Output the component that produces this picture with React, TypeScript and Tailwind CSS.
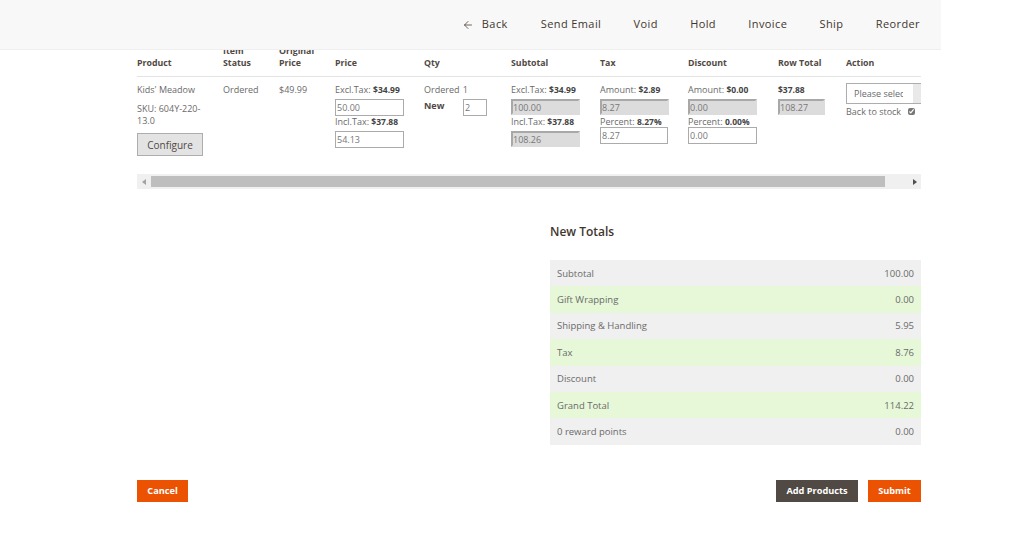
import React from 'react';
import { ArrowLeft } from 'lucide-react';

const navItems = ['Send Email', 'Void', 'Hold', 'Invoice', 'Ship', 'Reorder'];

const totals = [
  ['Subtotal', '100.00'],
  ['Gift Wrapping', '0.00'],
  ['Shipping & Handling', '5.95'],
  ['Tax', '8.76'],
  ['Discount', '0.00'],
  ['Grand Total', '114.22'],
  ['0 reward points', '0.00'],
];

const gridCols = 'grid grid-cols-[86px_56px_56px_89px_87px_89px_88px_90px_68px_75px]';

const Field = ({ value, disabled, w = 'w-[69px]' }: { value: string; disabled?: boolean; w?: string }) => (
  <input
    readOnly
    value={value}
    className={
      disabled
        ? `${w} block h-[16px] pl-[0px] text-[9px] text-[#777] bg-[#dcdcdc] border-[2px] border-[#dcdcdc] border-t-[#a8a8a8] border-l-[#a8a8a8] outline-none`
        : `${w} block h-[17px] pl-[1px] text-[9px] text-[#777] bg-white border border-[#ababab] outline-none`
    }
  />
);

const Line = ({ label, value }: { label: string; value: string }) => (
  <div className="h-[13px] leading-[13px] mb-[3px] whitespace-nowrap">
    {label} <b className="font-bold text-[8.5px] text-[#444]">{value}</b>
  </div>
);

export default function App() {
  return (
    <div className="w-[1034px] h-[538px] bg-white overflow-hidden font-['Open_Sans',sans-serif] text-[9px] text-[#6a6a6a]">
      <header className="w-[941px] h-[50px] bg-[#f8f8f8] border-b border-[#efefef] flex items-center justify-end pr-[21px] text-[11px] text-[#41362f] tracking-[0.4px]">
        <div className="flex items-center gap-[8px] mr-[33px]">
          <ArrowLeft size={12} strokeWidth={1.5} />
          <span>Back</span>
        </div>
        <div className="flex gap-[32.3px]">
          {navItems.map((item) => (
            <span key={item}>{item}</span>
          ))}
        </div>
      </header>

      <main className="ml-[137px] w-[784px]">
        {/* header row is taller than its box, top line gets cut off by the bar */}
        <div className="h-[27px] flex flex-col justify-end overflow-hidden pb-[7px] border-b border-[#e3e3e3]">
          <div className={`${gridCols} shrink-0 items-end font-bold text-[#514943] leading-[12px] text-[8.8px]`}>
            <span>Product</span>
            <span>Item<br />Status</span>
            <span>Original<br />Price</span>
            <span>Price</span>
            <span>Qty</span>
            <span>Subtotal</span>
            <span>Tax</span>
            <span>Discount</span>
            <span>Row Total</span>
            <span>Action</span>
          </div>
        </div>

        <div className={`${gridCols} h-[97px] pt-[6px] overflow-hidden`}>
          <div>
            <div className="h-[13px] leading-[13px]">Kids' Meadow</div>
            <div className="mt-[7px] leading-[12px] w-[70px]">SKU: 604Y-220-13.0</div>
            <button className="mt-[6px] w-[66px] h-[23px] pt-[1px] bg-[#e3e3e3] border border-[#adadad] text-[10px] text-[#514943]">Configure</button>
          </div>
          <div className="leading-[13px]">Ordered</div>
          <div className="leading-[13px]">$49.99</div>
          <div>
            <Line label="Excl.Tax:" value="$34.99" />
            <Field value="50.00" />
            <div className="-mt-[1px]"><Line label="Incl.Tax:" value="$37.88" /></div>
            <Field value="54.13" />
          </div>
          <div>
            <div className="h-[13px] leading-[13px] mb-[3px]">Ordered <span className="ml-[1px]">1</span></div>
            <div className="flex items-start">
              <b className="w-[39px] font-bold text-[#514943] leading-[13px]">New</b>
              <Field value="2" w="w-[24px]" />
            </div>
          </div>
          <div>
            <Line label="Excl.Tax:" value="$34.99" />
            <Field value="100.00" disabled />
            <Line label="Incl.Tax:" value="$37.88" />
            <Field value="108.26" disabled />
          </div>
          <div>
            <Line label="Amount:" value="$2.89" />
            <Field value="8.27" disabled />
            <div className="-mb-[4px]"><Line label="Percent:" value="8.27%" /></div>
            <Field value="8.27" w="w-[68px]" />
          </div>
          <div>
            <Line label="Amount:" value="$0.00" />
            <Field value="0.00" disabled />
            <div className="-mb-[4px]"><Line label="Percent:" value="0.00%" /></div>
            <Field value="0.00" />
          </div>
          <div>
            <Line label="" value="$37.88" />
            <Field value="108.27" disabled w="w-[47px]" />
          </div>
          <div className="overflow-hidden">
            <div className="w-[90px] h-[21px] flex border border-[#adadad] bg-white">
              <span className="w-[49px] ml-[7px] mr-[10px] overflow-hidden whitespace-nowrap leading-[20px]">Please select</span>
              <span className="flex-1 bg-[#e9e9e9]" />
            </div>
            <label className="flex items-center mt-[1px] leading-[13px] whitespace-nowrap">
              Back to stock
              <input type="checkbox" readOnly checked className="ml-[7px] w-[7px] h-[7px] accent-[#777]" />
            </label>
          </div>
        </div>

        <div className="h-[15px] bg-[#f0f0f0] flex items-center">
          <div className="w-[14px] flex justify-center">
            <span className="border-y-[3px] border-r-[4px] border-y-transparent border-r-[#a3a3a3]" />
          </div>
          <div className="w-[734px] h-[11px] bg-[#bebebe]" />
          <div className="flex-1 flex justify-end pr-[4px]">
            <span className="border-y-[3px] border-l-[4px] border-y-transparent border-l-[#505050]" />
          </div>
        </div>

        <section className="ml-[413px] mt-[35px]">
          <h2 className="text-[12px] leading-[16px] font-semibold text-[#41362f]">New Totals</h2>
          <div className="mt-[20px]">
            {totals.map(([label, value], i) => (
              <div
                key={label}
                className={`h-[26.4px] pt-[1px] px-[7px] flex items-center justify-between text-[9.5px] ${i % 2 ? 'bg-[#e6f8d8]' : 'bg-[#f0f0f0]'}`}
              >
                <span>{label}</span>
                <span>{value}</span>
              </div>
            ))}
          </div>
        </section>

        <div className="mt-[35px] flex items-center text-[9.2px] font-bold text-white">
          <button className="w-[51px] h-[22px] bg-[#eb5202]">Cancel</button>
          <button className="ml-auto w-[82px] h-[22px] bg-[#514943]">Add Products</button>
          <button className="ml-[10px] w-[53px] h-[22px] bg-[#eb5202]">Submit</button>
        </div>
      </main>
    </div>
  );
}
